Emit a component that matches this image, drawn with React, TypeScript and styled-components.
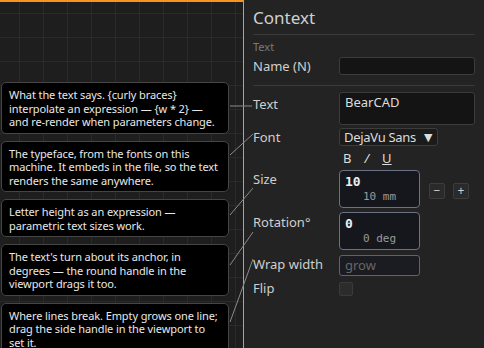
import styled, { createGlobalStyle } from 'styled-components';

// the notes keep the line breaks of the original callouts
const notes = [
    'What the text says. {curly braces}\ninterpolate an expression — {w * 2} —\nand re-render when parameters change.',
    'The typeface, from the fonts on this\nmachine. It embeds in the file, so the text\nrenders the same anywhere.',
    'Letter height as an expression —\nparametric text sizes work.',
    "The text's turn about its anchor, in\ndegrees — the round handle in the\nviewport drags it too.",
    'Where lines break. Empty grows one line;\ndrag the side handle in the viewport to\nset it.',
];

// leader lines from each note to its field label
const leaders = [
    [230, 106, 252, 106],
    [230, 155, 253, 134],
    [230, 215, 253, 188],
    [230, 265, 253, 232],
    [230, 322, 253, 259],
];

const App = () => {
    return (
        <>
            <GlobalStyle />
            <Page>
                <Viewport>
                    <Notes>
                        {notes.map((n) => (
                            <Note key={n}>{n}</Note>
                        ))}
                    </Notes>
                </Viewport>
                <Panel>
                    <Heading>Context</Heading>
                    <Section>Text</Section>
                    <Row $gap={3}>
                        <Label>Name (N)</Label>
                        <TextInput />
                    </Row>
                    <Divider />
                    <Row $gap={6} $align="start">
                        <Label $top={4}>Text</Label>
                        <TextArea>BearCAD</TextArea>
                    </Row>
                    <Row $gap={3}>
                        <Label>Font</Label>
                        <Select>
                            DejaVu Sans <Caret>▼</Caret>
                        </Select>
                    </Row>
                    <Row $gap={4}>
                        <span />
                        <Styles>
                            <StyleBtn>B</StyleBtn>
                            <StyleBtn $italic>/</StyleBtn>
                            <StyleBtn $underline>U</StyleBtn>
                        </Styles>
                    </Row>
                    <Row $gap={4} $align="start">
                        <Label $top={1}>Size</Label>
                        <NumberWrap>
                            <NumberField>
                                <Value>10</Value>
                                <Unit>10 mm</Unit>
                            </NumberField>
                            <Steppers>
                                <Stepper>−</Stepper>
                                <Stepper>+</Stepper>
                            </Steppers>
                        </NumberWrap>
                    </Row>
                    <Row $gap={4} $align="start">
                        <Label $top={2}>Rotation°</Label>
                        <NumberField>
                            <Value>0</Value>
                            <Unit>0 deg</Unit>
                        </NumberField>
                    </Row>
                    <Row $gap={5}>
                        <Label $lift={3}>Wrap width</Label>
                        <WrapInput>grow</WrapInput>
                    </Row>
                    <Row $gap={6}>
                        <Label $lift={2}>Flip</Label>
                        <Check />
                    </Row>
                </Panel>
                <Leaders width="484" height="348">
                    {leaders.map(([x1, y1, x2, y2]) => (
                        <line key={y1} x1={x1} y1={y1} x2={x2} y2={y2} stroke="#8a8a8a" strokeWidth="1" />
                    ))}
                </Leaders>
            </Page>
        </>
    );
};

export default App;

const GlobalStyle = createGlobalStyle`
    body {
        margin: 0;
        background: #1e1e1e;
        font-family: "Noto Sans", "DejaVu Sans", sans-serif;
    }
`

const Page = styled.div`
    position: relative;
    width: 484px;
    height: 348px;
    display: flex;
    overflow: hidden;
`

const Viewport = styled.div`
    width: 243px;
    flex-shrink: 0;
    border-top: 2px solid #f7931e;
    border-right: 1px solid #f7931e;
    background-color: #1e1e1e;
    background-image:
        linear-gradient(to right, #2a2a2a 1px, transparent 1px),
        linear-gradient(to bottom, #2a2a2a 1px, transparent 1px);
    background-size: 24px 24px;
    background-position: 19px 11px;
`

const Notes = styled.div`
    display: flex;
    flex-direction: column;
    gap: 7px;
    padding: 80px 0 0 1px;
    width: 228px;
`

const Note = styled.div`
    background: #000;
    border: 1px solid #454545;
    border-radius: 5px;
    padding: 5px 6px 4px 7px;
    color: #e8e8e8;
    font-size: 11px;
    line-height: 13.5px;
    letter-spacing: -0.1px;
    white-space: pre;
    overflow: hidden;
`

const Panel = styled.div`
    flex: 1;
    background: #232323;
    padding: 0 9px;
    display: flex;
    flex-direction: column;
`

const Heading = styled.div`
    height: 34px;
    line-height: 35px;
    font-size: 17px;
    color: #cfcfcf;
    border-bottom: 1px solid #3a3a3a;
`

const Section = styled.div`
    margin-top: 5px;
    font-size: 11px;
    line-height: 14px;
    color: #7a7a7a;
`

const Row = styled.div<{ $gap: number; $align?: string }>`
    display: grid;
    grid-template-columns: 86px 1fr;
    align-items: ${(p) => p.$align || 'center'};
    margin-top: ${(p) => p.$gap}px;
`

const Label = styled.div<{ $top?: number; $lift?: number }>`
    font-size: 13px;
    line-height: 16px;
    color: #cfcfcf;
    padding-top: ${(p) => p.$top || 0}px;
    margin-top: ${(p) => -(p.$lift || 0)}px;
`

const Divider = styled.div`
    margin-top: 10px;
    border-top: 1px solid #3a3a3a;
`

const TextInput = styled.div`
    height: 16px;
    background: #141414;
    border: 1px solid #3c3c3c;
    border-radius: 3px;
`

const TextArea = styled.div`
    height: 31px;
    background: #141414;
    border: 1px solid #3c3c3c;
    border-radius: 3px;
    padding: 0 5px;
    font-size: 13px;
    line-height: 18px;
    color: #dcdcdc;
`

const Select = styled.div`
    width: 93px;
    height: 16px;
    background: #1b1b1b;
    border: 1px solid #3c3c3c;
    border-radius: 3px;
    padding: 0 0 0 4px;
    box-sizing: content-box;
    font-size: 13px;
    line-height: 16px;
    letter-spacing: -0.3px;
    color: #dcdcdc;
    display: flex;
    align-items: center;
    gap: 8px;
`

const Caret = styled.span`
    font-size: 11px;
    color: #dcdcdc;
`

const Styles = styled.div`
    display: flex;
    gap: 13px;
    padding-left: 4px;
    height: 16px;
    align-items: center;
`

const StyleBtn = styled.span<{ $italic?: boolean; $underline?: boolean }>`
    font-size: 13px;
    color: #dcdcdc;
    text-decoration: ${(p) => (p.$underline ? 'underline' : 'none')};
    font-style: ${(p) => (p.$italic ? 'italic' : 'normal')};
`

const NumberWrap = styled.div`
    display: flex;
    align-items: center;
    gap: 9px;
`

const NumberField = styled.div`
    width: 79px;
    height: 36px;
    background: #16171c;
    border: 1px solid #6b7283;
    border-radius: 4px;
    display: flex;
    flex-direction: column;
    font-family: "DejaVu Sans Mono", monospace;
`

const Value = styled.div`
    padding: 3px 0 0 5px;
    font-size: 13px;
    line-height: 16px;
    font-weight: bold;
    color: #eeeeee;
`

const Unit = styled.div`
    text-align: center;
    font-size: 11px;
    line-height: 14px;
    color: #9a9a9a;
`

const Steppers = styled.div`
    display: flex;
    gap: 8px;
    padding-top: 4px;
`

const Stepper = styled.div`
    width: 14px;
    height: 14px;
    background: #2a2a2a;
    border: 1px solid #3c3c3c;
    border-radius: 2px;
    color: #cfcfcf;
    font-size: 12px;
    line-height: 14px;
    text-align: center;
`

const WrapInput = styled.div`
    width: 74px;
    height: 19px;
    background: #1b1c21;
    border: 1px solid #5d6374;
    border-radius: 3px;
    padding-left: 5px;
    font-size: 13px;
    line-height: 19px;
    color: #666;
`

const Check = styled.div`
    width: 12px;
    height: 12px;
    background: #2c2c2c;
    border: 1px solid #3a3a3a;
    border-radius: 2px;
`

const Leaders = styled.svg`
    position: absolute;
    left: 0;
    top: 0;
    pointer-events: none;
`
